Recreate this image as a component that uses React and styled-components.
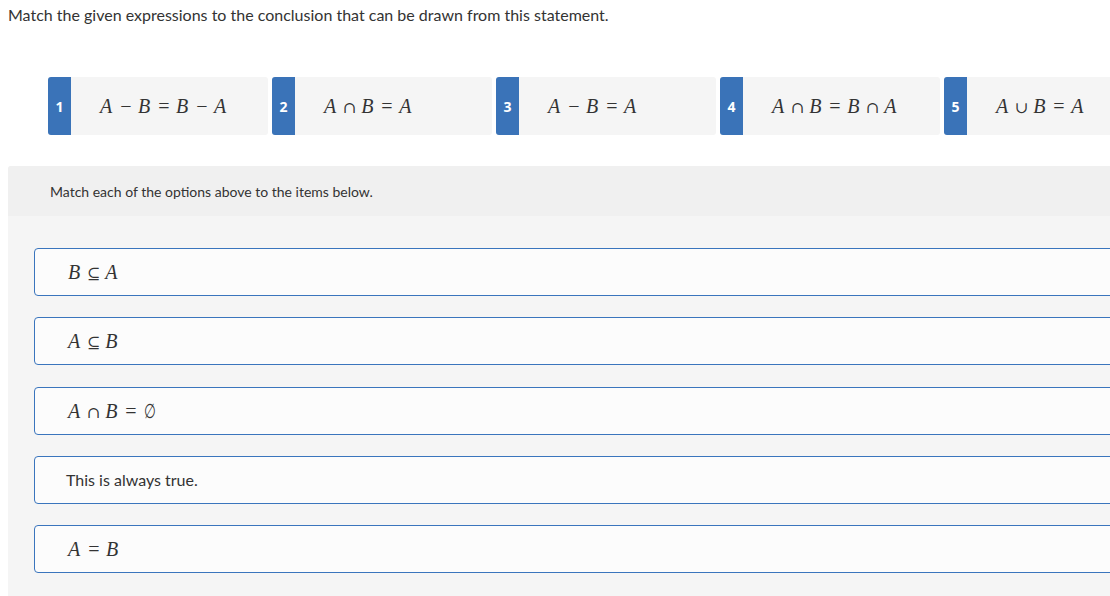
import React from "react";
import styled, { createGlobalStyle } from "styled-components";

const Global = createGlobalStyle`
  html, body { overflow: hidden; }
  body {
    margin: 0;
    padding: 6px 0 0 8px;
    background: #ffffff;
    font-family: "Lato", "Open Sans", sans-serif;
    color: #333333;
  }
`;

const Page = styled.div`
  display: flex;
  flex-direction: column;
  width: 1140px;
`;

const Prompt = styled.p`
  margin: 0;
  font-size: 16px;
  line-height: 18px;
  color: #333;
`;

const ChipRow = styled.div`
  display: flex;
  gap: 4px;
  margin: 53px 0 0 40px;
`;

const Chip = styled.div`
  display: flex;
  flex: 0 0 220px;
  height: 58px;
  background: #f5f5f5;
  border-radius: 3px;
  overflow: hidden;
`;

const Badge = styled.div`
  flex: 0 0 23px;
  display: flex;
  align-items: center;
  justify-content: center;
  background: #3a73b8;
  color: #fff;
  font-family: "Open Sans", "Lato", sans-serif;
  font-weight: 700;
  font-size: 14px;
`;

const ChipBody = styled.div`
  display: flex;
  align-items: center;
  padding-left: 29px;
`;

const Math = styled.span`
  font-family: "Liberation Serif", "DejaVu Serif", serif;
  font-size: 20px;
  color: #333;
  white-space: nowrap;
  display: inline-flex;
  align-items: baseline;
`;

const V = styled.i`
  font-style: italic;
  margin-right: 1.5px;
`;

const Op = styled.span`
  font-style: normal;
  margin: 0 6.5px;
  ${(p) =>
    p.$set
      ? `font-family: "DejaVu Serif", serif; font-size: 16px; margin: 0 5px;`
      : ""}
`;

const Empty = styled.span`
  display: inline-block;
  transform: scaleX(0.68);
  margin-left: -2px;
`;

const Panel = styled.section`
  margin-top: 31px;
  background: #f5f5f5;
  border-radius: 3px;
  display: flex;
  flex-direction: column;
  padding-bottom: 30px;
`;

const PanelHead = styled.div`
  background: #f0f0f0;
  height: 50px;
  display: flex;
  align-items: center;
  padding-left: 42px;
  font-size: 14px;
  color: #333;
  border-radius: 3px 3px 0 0;
`;

const Answers = styled.div`
  display: flex;
  flex-direction: column;
  gap: 21.25px;
  padding: 32px 0 0 26px;
`;

const AnswerBox = styled.div`
  height: 48px;
  box-sizing: border-box;
  border: 1px solid #3a75bd;
  border-radius: 4px;
  background: #fcfcfc;
  display: flex;
  align-items: center;
  padding-left: ${(p) => (p.$text ? "31px" : "33px")};
`;

const Plain = styled.span`
  font-size: 16px;
  color: #333;
`;

const Expr = ({ parts }) => (
  <Math>
    {parts.map((p, i) =>
      /^[A-Z]$/.test(p) ? (
        <V key={i}>{p}</V>
      ) : p === "∅" ? (
        <Empty key={i}>∅</Empty>
      ) : (
        <Op key={i} $set={p === "∩" || p === "∪" || p === "⊆"}>{p}</Op>
      )
    )}
  </Math>
);

const options = [
  ["A", "−", "B", "=", "B", "−", "A"],
  ["A", "∩", "B", "=", "A"],
  ["A", "−", "B", "=", "A"],
  ["A", "∩", "B", "=", "B", "∩", "A"],
  ["A", "∪", "B", "=", "A"],
];

const answers = [
  { expr: ["B", "⊆", "A"] },
  { expr: ["A", "⊆", "B"] },
  { expr: ["A", "∩", "B", "=", "∅"] },
  { text: "This is always true." },
  { expr: ["A", "=", "B"] },
];

export default function App() {
  return (
    <>
      <Global />
      <Page>
        <Prompt>Match the given expressions to the conclusion that can be drawn from this statement.</Prompt>
        <ChipRow>
          {options.map((o, i) => (
            <Chip key={i}>
              <Badge>{i + 1}</Badge>
              <ChipBody>
                <Expr parts={o} />
              </ChipBody>
            </Chip>
          ))}
        </ChipRow>
        <Panel>
          <PanelHead>Match each of the options above to the items below.</PanelHead>
          <Answers>
            {answers.map((a, i) => (
              <AnswerBox key={i} $text={!!a.text}>
                {a.text ? <Plain>{a.text}</Plain> : <Expr parts={a.expr} />}
              </AnswerBox>
            ))}
          </Answers>
        </Panel>
      </Page>
    </>
  );
}
